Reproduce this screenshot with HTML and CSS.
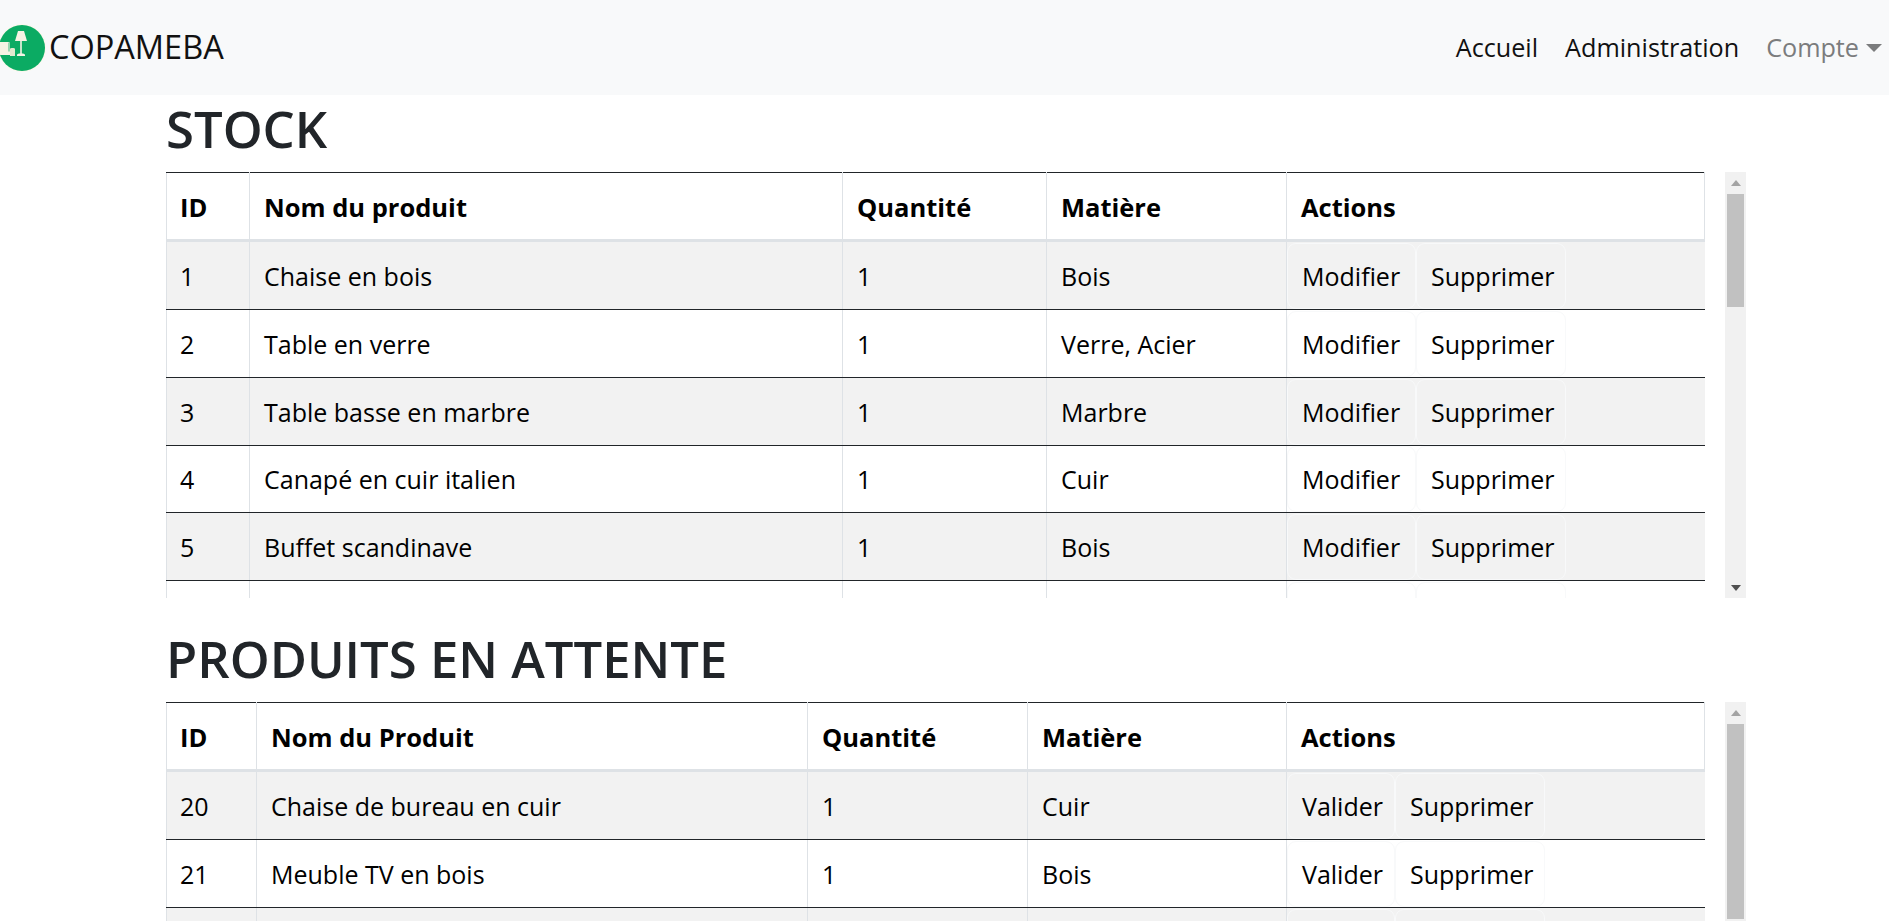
FILE: index.html
```html
<!DOCTYPE html>
<html lang="fr">
<head>
<meta charset="utf-8">
<title>COPAMEBA</title>
<link rel="stylesheet" href="styles.css">
</head>
<body>
<nav class="navbar">
  <a class="brand" href="#">
    <svg class="logo" viewBox="0 0 48 50" width="48" height="50" aria-hidden="true">
      <circle cx="24" cy="25" r="24" fill="#fbf8ec"/>
      <circle cx="24" cy="25" r="23" fill="#0bab63"/>
      <path d="M20 8h6l3 10H17z" fill="#f6f3e4"/>
      <path d="M22.200 18h1.600v14h-1.600z" fill="#f6f3e4"/>
      <path d="M19 32c0-1 1.500-1.500 3-1.500h2c1.500 0 3 .5 3 1.500v1h-8z" fill="#f6f3e4"/>
      <path d="M2 19h8.500c1 0 1.500.6 1.500 1.500V32H3c-1 0-1.500-.5-1.500-1.500z" fill="#f6f3e4"/>
      <path d="M12 26c0-1.200 5-1.200 5 0v7h-5z" fill="#e4e8cf"/>
      <path d="M11 19.500v9" stroke="#0bab63" stroke-width=".8"/>
    </svg>
    <span>COPAMEBA</span>
  </a>
  <ul class="nav-links">
    <li><a href="#">Accueil</a></li>
    <li><a href="#">Administration</a></li>
    <li><a class="muted" href="#">Compte<i class="caret"></i></a></li>
  </ul>
</nav>
<main class="page">
  <h1 class="title title-first">STOCK</h1>
  <div class="panel">
    <div class="clip">
      <table class="grid stock">
        <colgroup><col class="c1"><col class="c2"><col class="c3"><col class="c4"><col class="c5"></colgroup>
        <thead><tr><th>ID</th><th>Nom du produit</th><th>Quantité</th><th>Matière</th><th>Actions</th></tr></thead>
        <tbody>
          <tr><td>1</td><td>Chaise en bois</td><td>1</td><td>Bois</td><td class="acts"><button class="btn b-mod">Modifier</button><button class="btn b-del">Supprimer</button></td></tr>
          <tr><td>2</td><td>Table en verre</td><td>1</td><td>Verre, Acier</td><td class="acts"><button class="btn b-mod">Modifier</button><button class="btn b-del">Supprimer</button></td></tr>
          <tr><td>3</td><td>Table basse en marbre</td><td>1</td><td>Marbre</td><td class="acts"><button class="btn b-mod">Modifier</button><button class="btn b-del">Supprimer</button></td></tr>
          <tr><td>4</td><td>Canapé en cuir italien</td><td>1</td><td>Cuir</td><td class="acts"><button class="btn b-mod">Modifier</button><button class="btn b-del">Supprimer</button></td></tr>
          <tr><td>5</td><td>Buffet scandinave</td><td>1</td><td>Bois</td><td class="acts"><button class="btn b-mod">Modifier</button><button class="btn b-del">Supprimer</button></td></tr>
          <tr><td>6</td><td>Commode ancienne</td><td>1</td><td>Bois</td><td class="acts"><button class="btn b-mod">Modifier</button><button class="btn b-del">Supprimer</button></td></tr>
        </tbody>
      </table>
    </div>
    <div class="bar">
      <span class="arrow arrow-up"></span>
      <div class="track"><span class="thumb thumb-stock"></span></div>
      <span class="arrow arrow-down"></span>
    </div>
  </div>
  <h2 class="title title-next">PRODUITS EN ATTENTE</h2>
  <div class="panel">
    <div class="clip">
      <table class="grid pending">
        <colgroup><col class="c1"><col class="c2"><col class="c3"><col class="c4"><col class="c5"></colgroup>
        <thead><tr><th>ID</th><th>Nom du Produit</th><th>Quantité</th><th>Matière</th><th>Actions</th></tr></thead>
        <tbody>
          <tr><td>20</td><td>Chaise de bureau en cuir</td><td>1</td><td>Cuir</td><td class="acts"><button class="btn b-ok">Valider</button><button class="btn b-del">Supprimer</button></td></tr>
          <tr><td>21</td><td>Meuble TV en bois</td><td>1</td><td>Bois</td><td class="acts"><button class="btn b-ok">Valider</button><button class="btn b-del">Supprimer</button></td></tr>
          <tr><td>22</td><td>Table à manger</td><td>1</td><td>Bois</td><td class="acts"><button class="btn b-ok">Valider</button><button class="btn b-del">Supprimer</button></td></tr>
        </tbody>
      </table>
    </div>
    <div class="bar">
      <span class="arrow arrow-up"></span>
      <div class="track"><span class="thumb thumb-pending"></span></div>
      <span class="arrow arrow-down"></span>
    </div>
  </div>
</main>
</body>
</html>
```
FILE: styles.css
```css
html, body {
  margin: 0;
  height: 100%;
  overflow: hidden;
  background: #fff;
}
body {
  font-family: "Open Sans", "Noto Sans", sans-serif;
  font-size: 25px;
  line-height: 1.5;
  color: #212529;
}
a { color: inherit; text-decoration: none; }

.navbar {
  height: 95px;
  background: #f8f9fa;
  display: flex;
  align-items: center;
  justify-content: space-between;
  padding-right: 7px;
}
.brand {
  display: flex;
  align-items: center;
  gap: 3px;
  margin-left: -2px;
  font-size: 32.5px;
  font-weight: 500;
  color: #111;
}
.logo { display: block; flex: none; }
.nav-links {
  display: flex;
  align-items: center;
  gap: 27px;
  margin: 0;
  padding: 0;
  list-style: none;
  font-size: 25.2px;
  color: #111;
}
.muted { color: #7b7c7d; }
.caret {
  display: inline-block;
  margin-left: 7px;
  vertical-align: 5px;
  border-top: 8px solid #7b7c7d;
  border-left: 8px solid transparent;
  border-right: 8px solid transparent;
}

.page { padding-left: 166px; }
.title {
  margin: 0;
  font-weight: 600;
  font-size: 50.8px;
  line-height: 60px;
  color: #212529;
}
.title-first { padding-top: 4px; height: 73px; }
.title-next { padding-top: 31px; height: 73px; }

.panel {
  display: flex;
  gap: 20px;
  width: 1580px;
  height: 426px;
}
.clip {
  width: 1539px;
  overflow: hidden;
}
.bar {
  width: 21px;
  flex: none;
  display: flex;
  flex-direction: column;
  background: #f1f1f1;
}
.arrow {
  flex: none;
  height: 21px;
  display: flex;
  align-items: center;
  justify-content: center;
}
.arrow::before {
  content: "";
  border-left: 5.5px solid transparent;
  border-right: 5.5px solid transparent;
}
.arrow-up::before { border-bottom: 6px solid #a3a3a3; }
.arrow-down::before { border-top: 6px solid #505050; }
.track {
  flex: 1;
  padding: 1px 2px 0;
}
.thumb {
  display: block;
  background: #c1c1c1;
}
.thumb-stock { height: 113px; }
.thumb-pending { height: 195px; }

.grid {
  width: 1539px;
  table-layout: fixed;
  border-collapse: collapse;
  color: #000;
}
.stock .c1 { width: 83px; }
.stock .c2 { width: 593px; }
.stock .c3 { width: 204px; }
.stock .c4 { width: 240px; }
.pending .c1 { width: 90px; }
.pending .c2 { width: 551px; }
.pending .c3 { width: 220px; }
.pending .c4 { width: 259px; }

.grid th, .grid td {
  box-sizing: border-box;
  text-align: left;
  border-left: 1px solid #dee2e6;
  border-right: 1px solid #dee2e6;
}
.grid th {
  height: 68px;
  padding: 2px 14px 0;
  border-top: 1px solid #212529;
  border-bottom: 3px solid #dee2e6;
  font-size: 25.5px;
  font-weight: 700;
}
.grid td {
  height: 68px;
  padding: 2px 14px 0;
  border-bottom: 1px solid #212529;
}
.grid th:first-child, .grid td:first-child { padding-left: 13px; }
.grid tbody tr:first-child td { height: 69px; }
.grid tbody tr:nth-child(4n) td { height: 67px; }
.grid tbody tr:nth-child(odd) { background: #f2f2f2; }
.grid tbody td:last-child { border-right: 0; }

.grid .acts { padding: 0; white-space: nowrap; }
.btn {
  height: 66px;
  padding: 2px 0 0 14px;
  margin: 0;
  box-sizing: border-box;
  vertical-align: middle;
  text-align: left;
  font: inherit;
  color: #000;
  background: transparent;
  border: 1px solid #f8f9fa;
  border-radius: 9px;
}
.b-mod { width: 129px; }
.b-ok { width: 108px; }
.b-del { width: 150px; }
```
